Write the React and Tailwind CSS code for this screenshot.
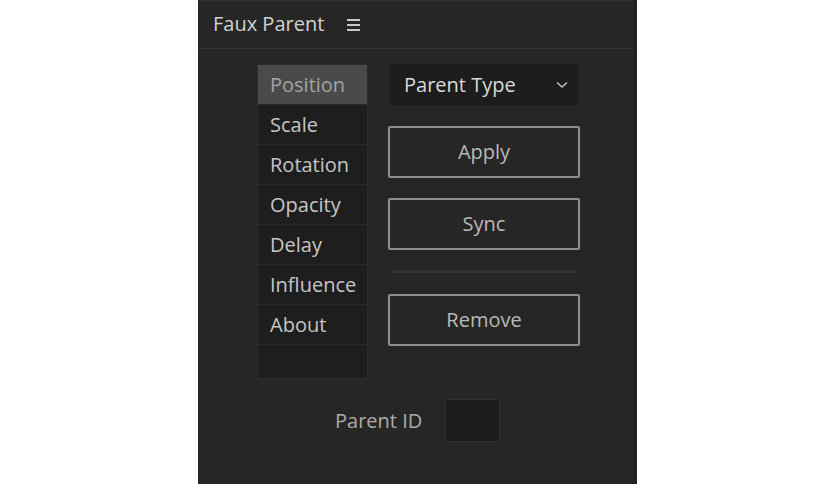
import React, { useState } from 'react';

const tabs = ['Position', 'Scale', 'Rotation', 'Opacity', 'Delay', 'Influence', 'About'];

function Menu() {
  return (
    <svg width="15" height="14" viewBox="0 0 15 14" className="ml-[22px] mt-[1px]">
      <path d="M1 2h13M1 7h13M1 12h13" stroke="#c9c9c9" strokeWidth="1.8" />
    </svg>
  );
}

function Btn({ children }) {
  return (
    <button className="h-[52px] w-full border-2 border-[#8e8e8e] bg-[#262626] text-[20px] text-[#b9b9b9] rounded-[2px]">
      {children}
    </button>
  );
}

export default function App() {
  const [tab, setTab] = useState('Position');

  return (
    <div className="w-[836px] h-[484px] bg-white" style={{ fontFamily: '"Open Sans", "Noto Sans", sans-serif' }}>
      <div className="ml-[198px] w-[439px] h-full bg-[#262626] border-r-4 border-[#222] flex flex-col">
        <div className="h-[49px] flex items-center pl-[15px] border-b border-[#343434] border-t border-t-[#2f2f2f]">
          <span className="text-[20px] text-[#d2d2d2] leading-none -mt-[2px]">Faux Parent</span>
          <Menu />
        </div>

        <div className="flex pl-[59px] pt-[15px]">
          <div className="w-[111px] bg-[#1e1e1e] border border-[#2c2c2c] flex flex-col">
            {tabs.map(t => (
              <button
                key={t}
                onClick={() => setTab(t)}
                className={`h-[40px] text-left pl-[12px] text-[20px] border-b border-[#2a2a2a] ${
                  tab === t ? 'bg-[#4a4a4a] text-[#a3a3a3]' : 'text-[#c6c6c6]'
                }`}
              >
                {t}
              </button>
            ))}
            <div className="h-[33px]" />
          </div>

          <div className="ml-[20px] w-[192px] flex flex-col">
            <div className="h-[41px] ml-[1px] w-[190px] bg-[#1d1d1d] rounded-[2px] flex items-center justify-between pl-[15px] pr-[11px]">
              <span className="text-[20px] text-[#dadada]">Parent Type</span>
              <svg width="12" height="8" viewBox="0 0 12 8">
                <path d="M1 1.5l5 4.5 5-4.5" fill="none" stroke="#bdbdbd" strokeWidth="1.6" />
              </svg>
            </div>
            <div className="mt-[21px] flex flex-col gap-[20px]">
              <Btn>Apply</Btn>
              <Btn>Sync</Btn>
            </div>
            <div className="mt-[20px] mx-[4px] h-[3px] bg-[#343434]" />
            <div className="mt-[21px]">
              <Btn>Remove</Btn>
            </div>
          </div>
        </div>

        <div className="flex items-center pl-[137px] mt-[20px]">
          <span className="text-[20px] text-[#ababab]">Parent ID</span>
          <div className="ml-[23px] w-[55px] h-[43px] bg-[#1d1d1d] border border-[#303030] rounded-[2px]" />
        </div>
      </div>
    </div>
  );
}
